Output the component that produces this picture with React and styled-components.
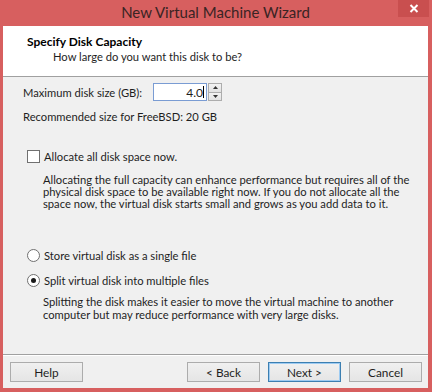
import React, { useState } from "react";
import styled, { createGlobalStyle } from "styled-components";

const Global = createGlobalStyle`
  html, body {
    margin: 0;
    padding: 0;
    background: #fff;
  }
  body {
    font-family: Lato, "Liberation Sans", sans-serif;
    font-size: 11.2px;
    color: #1e1e1e;
  }
`;

const Window = styled.div`
  width: 432px;
  height: 392px;
  box-sizing: border-box;
  background: #d75f5f;
  padding: 0 4px 4px 3px;
  display: flex;
  flex-direction: column;
  white-space: nowrap;
`;

const TitleBar = styled.div`
  position: relative;
  height: 26px;
  flex: none;
  display: flex;
  align-items: center;
  justify-content: center;
`;

const Title = styled.span`
  font-size: 15px;
  color: #3a2424;
  margin-top: -3px;
`;

const CloseButton = styled.div`
  position: absolute;
  right: -1px;
  top: 0;
  width: 31px;
  height: 17px;
  background: #c94f4f;
  display: flex;
  align-items: center;
  justify-content: center;
`;

const Client = styled.div`
  flex: 1;
  min-height: 0;
  display: flex;
  flex-direction: column;
  background: #f0f0f0;
`;

const Header = styled.div`
  height: 51px;
  flex: none;
  box-sizing: border-box;
  background: #fff;
  border-bottom: 1px solid #a0a0a0;
  padding: 9px 0 0 24px;
`;

const HeaderTitle = styled.div`
  font-weight: bold;
  font-size: 12px;
  color: #000;
  line-height: 14px;
`;

const HeaderSub = styled.div`
  margin: 1px 0 0 26px;
  line-height: 14px;
`;

const Body = styled.div`
  flex: 1;
  min-height: 0;
  overflow: hidden;
  padding: 6px 20px 0 20px;
  display: flex;
  flex-direction: column;
`;

const SizeRow = styled.div`
  display: flex;
  align-items: center;
  height: 18px;
`;

const SizeLabel = styled.span`
  width: 130px;
`;

const SizeInput = styled.div`
  width: 50px;
  height: 16px;
  border: 1px solid #7a9cd3;
  background: #fff;
  display: flex;
  align-items: center;
  justify-content: flex-end;
  padding-right: 2px;
  font-size: 12px;
`;

const Caret = styled.span`
  width: 1px;
  height: 12px;
  background: #000;
`;

const Spinner = styled.div`
  width: 14px;
  height: 18px;
  display: flex;
  flex-direction: column;
  margin-left: 1px;
`;

const SpinHalf = styled.div`
  flex: 1;
  border: 1px solid #adadad;
  background: linear-gradient(#f2f2f2, #e2e2e2);
  display: flex;
  align-items: center;
  justify-content: center;
  & + & {
    border-top: none;
  }
`;

const Text = styled.div`
  margin-top: ${p => p.mt || 0}px;
  margin-left: ${p => p.ml || 0}px;
  line-height: ${p => p.lh || 14}px;
`;

const OptionRow = styled.label`
  display: flex;
  align-items: center;
  height: 14px;
  margin-top: ${p => p.mt || 0}px;
  margin-left: 4px;
  gap: 4px;
`;

const CheckBox = styled.span`
  width: 11px;
  height: 11px;
  border: 1px solid #707070;
  background: #fff;
`;

const Radio = styled.span`
  width: 11px;
  height: 11px;
  border-radius: 50%;
  border: 1px solid #707070;
  background: #fff;
  display: flex;
  align-items: center;
  justify-content: center;
  &::after {
    content: "";
    width: 5px;
    height: 5px;
    border-radius: 50%;
    background: ${p => (p.checked ? "#1a1a1a" : "transparent")};
  }
`;

const Footer = styled.div`
  flex: none;
  height: 34px;
  box-sizing: border-box;
  border-top: 1px solid #a0a0a0;
  box-shadow: inset 0 1px 0 #fff;
  display: flex;
  align-items: center;
  padding: 0 6px 0 7px;
  gap: 8px;
`;

const Spacer = styled.div`
  flex: 1;
`;

const Button = styled.button`
  width: 73px;
  height: 20px;
  box-sizing: border-box;
  font: inherit;
  font-size: 11.8px;
  color: #1e1e1e;
  padding: 0;
  border: 1px solid ${p => (p.primary ? "#3c7fb1" : "#acacac")};
  box-shadow: ${p => (p.primary ? "inset 0 0 0 1px #9dcbf2" : "none")};
  background: linear-gradient(#f0f0f0, #e5e5e5);
  margin-top: 1px;
`;

export default function App() {
  const [split, setSplit] = useState(true);
  return (
    <Window>
      <Global />
      <TitleBar>
        <Title>New Virtual Machine Wizard</Title>
        <CloseButton>
          <svg width="10" height="9" viewBox="0 0 10 9">
            <path d="M1.5 1 L8.5 8 M8.5 1 L1.5 8" stroke="#fff" strokeWidth="2" />
          </svg>
        </CloseButton>
      </TitleBar>
      <Client>
        <Header>
          <HeaderTitle>Specify Disk Capacity</HeaderTitle>
          <HeaderSub>How large do you want this disk to be?</HeaderSub>
        </Header>
        <Body>
          <SizeRow>
            <SizeLabel>Maximum disk size (GB):</SizeLabel>
            <SizeInput>
              4.0<Caret />
            </SizeInput>
            <Spinner>
              <SpinHalf>
                <svg width="5" height="3" viewBox="0 0 5 3">
                  <path d="M0 3 L2.5 0 L5 3Z" fill="#333" />
                </svg>
              </SpinHalf>
              <SpinHalf>
                <svg width="5" height="3" viewBox="0 0 5 3">
                  <path d="M0 0 L2.5 3 L5 0Z" fill="#333" />
                </svg>
              </SpinHalf>
            </Spinner>
          </SizeRow>
          <Text mt={9}>Recommended size for FreeBSD: 20 GB</Text>
          <OptionRow mt={25}>
            <CheckBox />
            Allocate all disk space now.
          </OptionRow>
          <Text mt={11} ml={20} lh={12}>
            Allocating the full capacity can enhance performance but requires all of the
            <br />
            physical disk space to be available right now. If you do not allocate all the
            <br />
            space now, the virtual disk starts small and grows as you add data to it.
          </Text>
          <OptionRow mt={38} onClick={() => setSplit(false)}>
            <Radio checked={!split} />
            Store virtual disk as a single file
          </OptionRow>
          <OptionRow mt={11} onClick={() => setSplit(true)}>
            <Radio checked={split} />
            Split virtual disk into multiple files
          </OptionRow>
          <Text mt={8} ml={20} lh={13}>
            Splitting the disk makes it easier to move the virtual machine to another
            <br />
            computer but may reduce performance with very large disks.
          </Text>
        </Body>
        <Footer>
          <Button>Help</Button>
          <Spacer />
          <Button>&lt; Back</Button>
          <Button primary>Next &gt;</Button>
          <Button>Cancel</Button>
        </Footer>
      </Client>
    </Window>
  );
}
